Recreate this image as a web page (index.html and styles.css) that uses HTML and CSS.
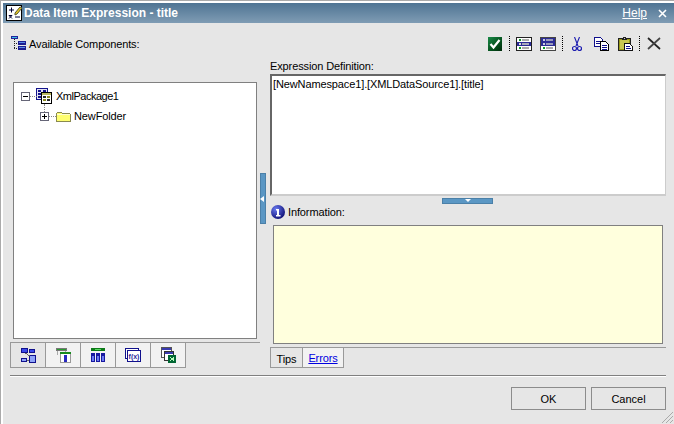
FILE: index.html
```
<!DOCTYPE html>
<html lang="en">
<head>
<meta charset="utf-8">
<title>Data Item Expression - title</title>
<link rel="stylesheet" href="styles.css">
</head>
<body>
<div class="window">
  <header class="titlebar">
    <svg class="ico title-ico" width="17" height="17" viewBox="0 0 17 17"><rect x=".5" y=".5" width="15" height="15" fill="#fff" stroke="#000"/><path d="M3 5h5M5.500 2.500v5M3 10.500h3M3 13.500l3-3M3 10.500l3 3M9 12h5" stroke="#003" fill="none"/><path d="M9 8l5-6 2 1-5 6-2 1z" fill="#e8c820" stroke="#553"/></svg>
    <span class="title-text">Data Item Expression - title</span>
    <a class="help">Help</a>
    <svg class="ico" width="9" height="9" viewBox="0 0 9 9"><path d="M1 1l7 7M8 1l-7 7" stroke="#fff" stroke-width="1.600"/></svg>
  </header>

  <div class="topbar">
    <div class="avail">
      <svg class="ico" width="16" height="15" viewBox="0 0 16 15" shape-rendering="crispEdges"><rect x="0" y="0" width="7" height="3" fill="#23239c"/><rect x="1" y="1" width="5" height="1" fill="#35c0e8"/><path d="M3 3v10M3 7h4M3 12h4" stroke="#222" stroke-dasharray="1 1" fill="none"/><rect x="7" y="5" width="8" height="4" fill="#1c1c90"/><rect x="8" y="6" width="6" height="1" fill="#5a8ae8"/><rect x="7" y="10" width="8" height="4" fill="#1c1c90"/><rect x="8" y="11" width="6" height="1" fill="#5a8ae8"/></svg>
      <span>Available Components:</span>
    </div>
    <div class="tools">
      <svg class="ico t-check" width="14" height="14" viewBox="0 0 14 14"><defs><linearGradient id="gc" x1="0" y1="0" x2="1" y2="1"><stop offset="0" stop-color="#1a8a48"/><stop offset=".6" stop-color="#04501c"/><stop offset="1" stop-color="#012a0c"/></linearGradient></defs><rect width="14" height="14" fill="url(#gc)"/><path d="M2.500 7l3 3.500L11.500 3" fill="none" stroke="#fff" stroke-width="2.200"/></svg>
      <i class="dots"></i>
      <svg class="ico t-a" width="16" height="14" viewBox="0 0 16 14" shape-rendering="crispEdges"><rect x=".5" y=".5" width="15" height="13" fill="#fff" stroke="#222"/><rect x="1" y="5" width="14" height="4" fill="#2c2c96"/><rect x="3" y="2" width="2" height="2" fill="#0a9a2a"/><rect x="6" y="2" width="7" height="2" fill="#aaa"/><rect x="3" y="6" width="2" height="2" fill="#ddd"/><rect x="6" y="6" width="7" height="2" fill="#aab"/><rect x="3" y="10" width="2" height="2" fill="#0a9a2a"/><rect x="6" y="10" width="7" height="2" fill="#aaa"/></svg>
      <svg class="ico t-b" width="16" height="14" viewBox="0 0 16 14" shape-rendering="crispEdges"><rect x=".5" y=".5" width="15" height="13" fill="#fff" stroke="#444"/><rect x="1" y="1" width="14" height="8" fill="#2c2c96"/><rect x="3" y="2" width="2" height="2" fill="#ccd"/><rect x="6" y="2" width="7" height="2" fill="#99b"/><rect x="3" y="6" width="2" height="2" fill="#ccd"/><rect x="6" y="6" width="7" height="2" fill="#99b"/><rect x="3" y="10" width="2" height="2" fill="#0a9a2a"/><rect x="6" y="10" width="7" height="2" fill="#aaa"/></svg>
      <i class="dots"></i>
      <svg class="ico t-cut" width="10" height="14" viewBox="0 0 10 14"><path d="M2.500 0l3.500 9M7.500 0L4 9" stroke="#1c1cb0" fill="none" stroke-width="1.100"/><circle cx="2.500" cy="11.500" r="2" fill="none" stroke="#1c1cb0" stroke-width="1.200"/><circle cx="7.500" cy="11.500" r="2" fill="none" stroke="#1c1cb0" stroke-width="1.200"/></svg>
      <svg class="ico t-copy" width="15" height="14" viewBox="0 0 15 14" shape-rendering="crispEdges"><path d="M.5.500h6l2 2v7h-8z" fill="#fff" stroke="#10108c"/><path d="M2 4h4M2 6h4" stroke="#10108c"/><path d="M6.500 4.500h5l3 3v6h-8z" fill="#fff" stroke="#000"/><path d="M8 8h5M8 10h5M8 12h5" stroke="#10108c"/></svg>
      <svg class="ico t-paste" width="15" height="14" viewBox="0 0 15 14" shape-rendering="crispEdges"><rect x=".5" y="1.500" width="12" height="12" fill="#9a9a18" stroke="#222"/><rect x="2" y="3" width="9" height="9" fill="#c8c850"/><path d="M4.500 2.500v-1h1v-1h2v1h1v1z" fill="#ccc" stroke="#222"/><path d="M6.500 6.500h5l3 3v4h-8z" fill="#fff" stroke="#111"/><path d="M8 9h4M8 11h5" stroke="#10108c"/></svg>
      <i class="dots"></i>
      <svg class="ico t-del" width="14" height="13" viewBox="0 0 14 13"><path d="M1 1l12 11" stroke="#222" stroke-width="1.700"/><path d="M13 1L1 12" stroke="#444" stroke-width="1.700"/></svg>
    </div>
  </div>

  <main class="main">
    <section class="left">
      <div class="tree">
        <div class="node node-root">
          <i class="toggle minus"></i>
          <svg class="ico" width="16" height="16" viewBox="0 0 16 16" shape-rendering="crispEdges"><rect x=".5" y=".5" width="11" height="11" fill="#e4e4f4" stroke="#14148c"/><path d="M2 3h3M7 3h3M2 6h3M7 6h3M2 9h3" stroke="#14148c" stroke-width="1.500"/><rect x="5.500" y="4.500" width="10" height="11" fill="#fff" stroke="#000"/><rect x="6" y="5" width="9" height="2" fill="#b8b860"/><rect x="7" y="8" width="3" height="2" fill="#2a2a2a"/><rect x="11" y="8" width="3" height="2" fill="#8a8a20"/><rect x="7" y="11" width="3" height="2" fill="#8a8a20"/><rect x="11" y="11" width="3" height="2" fill="#2a2a2a"/></svg>
          <span class="name-pkg">XmlPackage1</span>
        </div>
        <div class="node node-child">
          <i class="toggle plus"></i>
          <svg class="ico" width="15" height="11" viewBox="0 0 15 11" shape-rendering="crispEdges"><path d="M.5 10.500v-8l1-1h4l1 1h7l1 1v7z" fill="#ffff70" stroke="#8a8a50"/><path d="M1 3h13" stroke="#ffffd0"/></svg>
          <span>NewFolder</span>
        </div>
      </div>
      <div class="icon-tabs">
        <div class="itab itab-on">
          <svg class="ico" width="15" height="15" viewBox="0 0 15 15" shape-rendering="crispEdges"><rect x=".5" y=".5" width="6" height="4" fill="#3a4ae8" stroke="#10108c"/><rect x="8.500" y="1.500" width="5" height="3" fill="#3a4ae8" stroke="#10108c"/><rect x=".5" y="10.500" width="5" height="3" fill="#8ea4f8" stroke="#10108c"/><rect x="8.500" y="7.500" width="6" height="7" fill="#8ea4f8" stroke="#10108c"/><path d="M4 5l5 3M6 12h2" stroke="#666"/></svg>
        </div>
        <div class="itab">
          <svg class="ico" width="15" height="15" viewBox="0 0 15 15" shape-rendering="crispEdges"><rect x=".5" y=".5" width="10" height="2" fill="#2a9a30" stroke="#777"/><path d="M1.500 3v4M9.500 3v1" stroke="#aaa"/><rect x="4.500" y="4.500" width="10" height="10" fill="#fff" stroke="#999"/><rect x="4" y="4" width="11" height="2" fill="#1a8a20"/><rect x="8" y="7" width="3" height="7" fill="#2828c0"/></svg>
        </div>
        <div class="itab">
          <svg class="ico" width="14" height="14" viewBox="0 0 14 14" shape-rendering="crispEdges"><rect width="14" height="3" fill="#0c7a18"/><rect x="4" y="1" width="6" height="1" fill="#5ad860"/><rect y="5" width="4" height="9" fill="#1818a0"/><rect x="5" y="5" width="4" height="9" fill="#1818a0"/><rect x="10" y="5" width="4" height="9" fill="#1818a0"/><rect x="1" y="8" width="2" height="5" fill="#6a7af0"/><rect x="6" y="8" width="2" height="5" fill="#6a7af0"/><rect x="11" y="8" width="2" height="5" fill="#6a7af0"/></svg>
        </div>
        <div class="itab">
          <svg class="ico" width="16" height="14" viewBox="0 0 16 14"><g shape-rendering="crispEdges"><rect x=".5" y=".5" width="13" height="10" fill="#fff" stroke="#10108c"/><rect x="2.500" y="2.500" width="13" height="11" fill="#fff" stroke="#10108c"/></g><text class="fx" x="9" y="11" text-anchor="middle">f(x)</text></svg>
        </div>
        <div class="itab">
          <svg class="ico" width="15" height="16" viewBox="0 0 15 16" shape-rendering="crispEdges"><rect x=".5" y=".5" width="10" height="10" fill="#fff" stroke="#555"/><rect x="1" y="1" width="9" height="2" fill="#3a3ab0"/><rect x="3.500" y="4.500" width="9" height="9" fill="#fff" stroke="#333"/><rect x="4" y="5" width="8" height="2" fill="#3a3ab0"/><rect x="7" y="8" width="8" height="8" fill="#063"/><path d="M9 10h1M12 10h1M9 13h1M12 13h1M10 11h2v1h-2" stroke="#bfb"/></svg>
        </div>
      </div>
    </section>

    <i class="vsplit"><i class="arrow-left"></i></i>

    <section class="right">
      <label class="expr-label">Expression Definition:</label>
      <div class="expr">[NewNamespace1].[XMLDataSource1].[title]</div>
      <i class="hsplit"><i class="arrow-down"></i></i>
      <div class="info-head">
        <svg class="ico" width="14" height="14" viewBox="0 0 14 14"><defs><radialGradient id="gi" cx=".35" cy=".3" r=".8"><stop offset="0" stop-color="#6a7af0"/><stop offset="1" stop-color="#08086c"/></radialGradient></defs><circle cx="7" cy="7" r="7" fill="url(#gi)"/><path d="M5 4h3v6h1.500v1.500H5V10h1V5.500H5z" fill="#fff"/></svg>
        <span>Information:</span>
      </div>
      <div class="info-box"></div>
      <div class="text-tabs">
        <div class="ttab ttab-on">Tips</div>
        <div class="ttab"><a class="link">Errors</a></div>
      </div>
    </section>
  </main>

  <footer class="footer">
    <button class="btn">OK</button>
    <button class="btn">Cancel</button>
  </footer>
</div>
<svg class="grip" width="12" height="12" viewBox="0 0 12 12"><path d="M12 1L1 12M12 5l-7 7M12 9l-3 3" stroke="#aaa"/></svg>
</body>
</html>
```
FILE: styles.css
```
* { box-sizing: border-box; }
html, body { margin: 0; padding: 0; }
body {
  width: 674px; height: 424px; overflow: hidden; position: relative;
  background: #fff;
  border-left: 1px solid #aaa; border-top: 1px solid #aaa;
  font: 11px "Liberation Sans", Arial, sans-serif;
  letter-spacing: -.12px;
  color: #000;
}
.ico { display: block; flex: none; }
i { display: block; }

.window { margin: 2px 0 0 2px; height: 421px; background: #e6e6e6; }
.titlebar {
  height: 20px; display: flex; align-items: center; padding: 0 7px 0 3px;
  background: linear-gradient(#4f7493, #7f9cb4);
  color: #fff;
}
.title-ico { margin-right: 1px; }
.title-text { font: bold 12px "Liberation Sans", sans-serif; letter-spacing: 0; flex: 1; }
.help { color: #fff; text-decoration: underline; margin-right: 11px; font-size: 12px; letter-spacing: 0; }

.topbar {
  height: 34px; display: flex; align-items: flex-end; justify-content: space-between;
  padding: 0 13px 6px 8px;
}
.avail { display: flex; align-items: center; gap: 2px; }
.tools { display: flex; align-items: center; height: 15px; }
.dots { width: 1px; height: 15px; background: repeating-linear-gradient(#000 0 1px, transparent 1px 2px); }
.t-check { margin-right: 7px; }
.t-a { margin: 0 8px 0 6px; }
.t-b { margin-right: 6px; }
.t-cut { margin: 0 12px 0 9px; }
.t-copy { margin-right: 9px; }
.t-paste { margin-right: 6px; }
.t-del { margin-left: 7px; }

.main { display: flex; height: 318px; }
.left { width: 251px; margin-left: 7px; padding-top: 25px; flex: none; }
.tree {
  width: 244px; margin-left: 3px; height: 257px; background: #fff; border: 1px solid #808080;
  padding-top: 4px; overflow: hidden;
}
.node { display: flex; align-items: center; position: relative; height: 18px; }
.node-root { padding-left: 7px; }
.node-root .toggle { margin-right: 6px; }
.node-root .ico { margin-right: 4px; }
.node-child { margin-top: 2px; padding-left: 26px; }
.node-child .toggle { margin-right: 7px; }
.node-child .ico { margin-right: 3px; }
.name-pkg { letter-spacing: -.5px; }
.node-child::before {
  content: ""; position: absolute; left: 30px; top: -3px; height: 8px;
  border-left: 1px dotted #888;
}
.node::after {
  content: ""; position: absolute; top: 9px; height: 1px;
  border-top: 1px dotted #888;
}
.node-root::after { left: 16px; width: 7px; }
.node-child::after { left: 35px; width: 7px; }
.toggle {
  width: 9px; height: 9px; border: 1px solid #667; background: #fff; position: relative; flex: none;
}
.toggle::before {
  content: ""; position: absolute; left: 1px; top: 3px; width: 5px; height: 1px; background: #000;
}
.plus::after {
  content: ""; position: absolute; left: 3px; top: 1px; width: 1px; height: 5px; background: #000;
}

.icon-tabs {
  display: flex; margin-top: 3px; width: 250px; height: 26px;
  border-top: 1px solid #999;
}
.itab {
  width: 35px; height: 25px; background: #f2f2f2; display: flex; align-items: center; justify-content: center;
  border-right: 1px solid #999; border-bottom: 1px solid #999;
}
.itab-on { background: #e6e6e6; border-left: 1px solid #999; width: 36px; }
.fx { font: bold 7px "Liberation Sans", sans-serif; fill: #2a2aa0; letter-spacing: 0; }

.vsplit {
  width: 6px; height: 51px; margin: 116px 0 0 -1px; flex: none;
  background: #5b97c4; border: 1px solid #4b80a8; position: relative;
  display: flex; align-items: center;
}
.arrow-left { width: 0; height: 0; border: 3px solid transparent; border-left: 0; border-right: 4px solid #fff; margin-left: -1px; }

.right { margin-left: 4px; width: 396px; flex: none; display: flex; flex-direction: column; }
.right > * { flex: none; }
.expr-label { height: 17px; display: flex; align-items: center; }
.expr {
  height: 122px; background: #fff; padding: 2px 1px; white-space: nowrap;
  border-style: solid; border-width: 2px 1px 2px 2px; border-color: #666 #ccc #ccc #666;
}
.hsplit {
  width: 51px; height: 6px; margin: 2px 0 0 172px; background: #5b97c4; border: 1px solid #4b80a8;
  display: flex; justify-content: center;
}
.arrow-down { width: 0; height: 0; border: 3px solid transparent; border-bottom: 0; border-top: 3px solid #fff; }
.info-head { display: flex; align-items: center; gap: 3px; margin: 1px 0 0 1px; height: 14px; }
.info-box { height: 119px; width: 390px; margin: 6px 0 0 3px; background: #ffffdd; border: 1px solid #808080; }
.text-tabs { display: flex; margin-top: 3px; height: 21px; border-top: 1px solid #999; }
.ttab {
  display: flex; align-items: center; justify-content: center; height: 20px; width: 41px;
  border-right: 1px solid #999; border-bottom: 1px solid #999; background: #f2f2f2;
}
.ttab-on { width: 33px; border-left: 1px solid #999; background: #e6e6e6; padding-top: 3px; }
.link { color: #0000e0; text-decoration: underline; }

.footer {
  margin: 0 8px 0 7px; padding-top: 11px; border-top: 1px solid #808080; box-shadow: inset 0 1px 0 #fff;
  display: flex; justify-content: flex-end; gap: 5px;
}
.btn {
  width: 75px; height: 23px; background: #e6e6e6; border: 1px solid #8c8c8c; padding: 0;
  font: 11px "Liberation Sans", Arial, sans-serif; color: #000;
}
.grip { position: absolute; right: 1px; bottom: 1px; }
```
